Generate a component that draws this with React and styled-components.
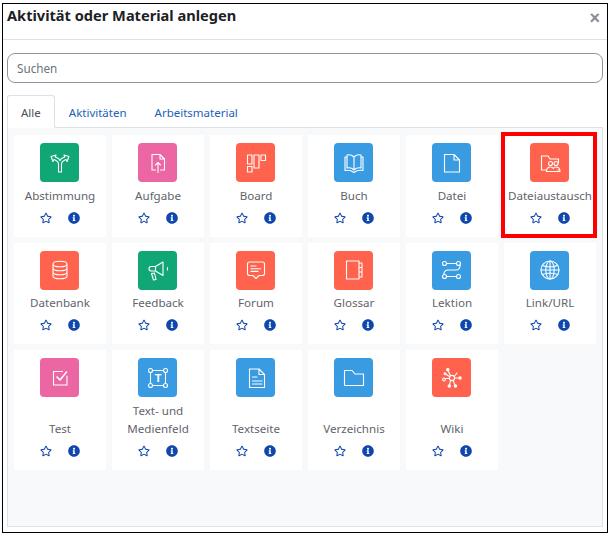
import React from "react";
import styled, { createGlobalStyle } from "styled-components";
import { FaRegStar, FaInfoCircle } from "react-icons/fa";

const GlobalStyle = createGlobalStyle`
  html, body {
    margin: 0;
    padding: 0;
    background: #fff;
  }
  body {
    font-family: "Noto Sans", "Open Sans", sans-serif;
  }
`;

const tones = {
  green: "#11a676",
  pink: "#eb66a2",
  coral: "#ff634d",
  blue: "#399be2",
};

const Frame = styled.div`
  box-sizing: border-box;
  display: flex;
  flex-direction: column;
  width: 606px;
  height: 530px;
  margin: 3px 0 0 2px;
  border: 1px solid #000;
  background: #fff;
`;

const Header = styled.header`
  box-sizing: border-box;
  display: flex;
  justify-content: space-between;
  align-items: flex-start;
  height: 36px;
  padding: 1px 7px 0 4px;
  border-bottom: 1px solid #dee2e6;
`;

const Title = styled.h1`
  margin: 0;
  font-size: 14.6px;
  line-height: 20px;
  font-weight: 700;
  color: #1d2125;
`;

const Close = styled.button`
  border: 0;
  padding: 0;
  margin-top: 3px;
  background: none;
  font-family: "Liberation Sans", sans-serif;
  font-size: 18px;
  line-height: 20px;
  font-weight: 700;
  color: #8a8d90;
`;

const Body = styled.div`
  flex: 1;
  display: flex;
  flex-direction: column;
  padding: 13px 4px 5px;
  min-height: 0;
`;

const Search = styled.input`
  box-sizing: border-box;
  width: 100%;
  height: 30px;
  padding: 0 9px;
  border: 1px solid #8f959e;
  border-radius: 8px;
  font-family: inherit;
  font-size: 11.7px;
  outline: none;

  &::placeholder {
    color: #6a737b;
    opacity: 1;
  }
`;

const Tabs = styled.nav`
  display: flex;
  margin-top: 12px;
  position: relative;
  z-index: 1;
`;

const Tab = styled.a`
  box-sizing: border-box;
  height: 33px;
  padding: 0 13px;
  margin-bottom: -1px;
  border: 1px solid ${(p) => (p.$active ? "#dee2e6" : "transparent")};
  border-bottom-color: ${(p) => (p.$active ? "#fff" : "transparent")};
  border-radius: 3px 3px 0 0;
  background: ${(p) => (p.$active ? "#fff" : "transparent")};
  color: ${(p) => (p.$active ? "#495057" : "#1b62b8")};
  font-size: 11.5px;
  line-height: 34px;
`;

const Panel = styled.div`
  flex: 1;
  border: 1px solid #dee2e6;
  background: #f8f9fa;
  padding: 7px 6px 0;
  min-height: 0;
`;

const Grid = styled.div`
  display: grid;
  grid-template-columns: repeat(6, 92px);
  gap: 6px;
  align-items: stretch;
`;

const Card = styled.div`
  box-sizing: border-box;
  position: relative;
  display: flex;
  flex-direction: column;
  align-items: center;
  padding: 8px 0 6px;
  background: #fff;
`;

const Highlight = styled.span`
  position: absolute;
  top: -3px;
  left: -3px;
  right: -1px;
  bottom: -1px;
  border: 4px solid #f00;
  pointer-events: none;
`;

const Tile = styled.div`
  display: flex;
  align-items: center;
  justify-content: center;
  width: 39px;
  height: 39px;
  margin-right: 1px;
  border-radius: 4px;
  background: ${(p) => tones[p.$tone]};
`;

const Glyph = styled.svg`
  width: 24px;
  height: 24px;
  fill: none;
  stroke: #fff;
  stroke-width: 1.1;
  stroke-linejoin: round;
  stroke-linecap: round;
`;

const Label = styled.div`
  flex: 1;
  display: flex;
  align-items: flex-end;
  justify-content: center;
  margin-top: 4.5px;
  font-size: 11.6px;
  line-height: 18.5px;
  color: #5f646b;
  text-align: center;
  white-space: pre-line;
`;

const Actions = styled.div`
  display: flex;
  align-items: center;
  justify-content: center;
  gap: 16px;
  height: 25.5px;
  color: #0f47ad;
  font-size: 12px;
`;

const Icons = {
  vote: (
    <path d="M10.5 21V13Q10.5 10.5 8 9.5L6 8.5 5 10.5 3 5.5 8 4 7.2 6 9.5 7Q11.5 8 12 9.5 12.5 8 14.5 7L16.8 6 16 4 21 5.5 19 10.5 18 8.5 16 9.5Q13.5 10.5 13.5 13V21Z" />
  ),
  assign: (
    <path d="M9.5 19H6V3.5H14L18.5 8V19H14.5M14 3.5V8H18.5M12 21.5V11.5M9.5 14L12 11.5 14.5 14" />
  ),
  board: (
    <>
      <rect x="3.5" y="4" width="4.5" height="9" />
      <rect x="3.5" y="15.5" width="4.5" height="5.5" />
      <rect x="10" y="4" width="5" height="13" />
      <rect x="17" y="4" width="4.5" height="5.5" />
    </>
  ),
  book: (
    <path d="M12 6C10 4 7 3.5 5 4V17C7 16.5 10 17 12 19 14 17 17 16.5 19 17V4C17 3.5 14 4 12 6V19M5 6H3V19.5C6 19 9.5 19.5 12 21.5 14.5 19.5 18 19 21 19.5V6H19" />
  ),
  file: <path d="M4.5 3.5H14L19.5 9V21H4.5ZM14 3.5V9H19.5" />,
  share: (
    <>
      <path d="M8.5 19H3.5V5H10L12 8H20.5V12M20.5 19H20" />
      <circle cx="12.5" cy="12.5" r="2" />
      <circle cx="18" cy="12.5" r="2" />
      <path d="M8.5 20.5C8.5 17.5 10.5 16 12.5 16 14 16 15 16.8 15.3 17.5 15.8 16.6 16.8 16 18 16 20 16 22 17.5 22 20.5Z" />
    </>
  ),
  database: (
    <path d="M5 6C5 4.5 8 3.2 12 3.2S19 4.5 19 6 16 8.8 12 8.8 5 7.5 5 6V18C5 19.5 8 20.8 12 20.8S19 19.5 19 18V6M5 10C5 11.5 8 12.8 12 12.8S19 11.5 19 10M5 14C5 15.5 8 16.8 12 16.8S19 15.5 19 14" />
  ),
  megaphone: (
    <path d="M9.5 8.5L17 4V17.5L9.5 13ZM9.5 8.5H5Q3 8.5 3 10.7T5 13H9.5M5.5 15.5L8.5 15 10 21.5 7.5 22ZM21.5 9.5V12" />
  ),
  forum: (
    <path d="M5.5 4H18.5Q20.5 4 20.5 6V15.5Q20.5 17.5 18.5 17.5H15L12 20.5 9 17.5H5.5Q3.5 17.5 3.5 15.5V6Q3.5 4 5.5 4ZM7 8H12M7 10.7H16.5M7 13.4H14" />
  ),
  glossary: (
    <path d="M4.5 3H17V21H4.5ZM17 5H20V9.5H17M17 9.5H20V14H17M17 14H20V19H17" />
  ),
  lesson: (
    <>
      <circle cx="4.5" cy="5.5" r="2" />
      <circle cx="18.5" cy="5.5" r="2" />
      <circle cx="4.5" cy="18.5" r="2" />
      <circle cx="18.5" cy="18.5" r="2" />
      <path d="M6.5 5.5H16.5M6.5 18.5H16.5M20 7C20.5 10 18.5 12 16 12H8C5.5 12 3.5 14 4 16.5" />
    </>
  ),
  globe: (
    <>
      <circle cx="12" cy="12" r="9" />
      <ellipse cx="12" cy="12" rx="4.2" ry="9" />
      <path d="M12 3V21M3 12H21M4.5 7.5C9 9.3 15 9.3 19.5 7.5M4.5 16.5C9 14.7 15 14.7 19.5 16.5" />
    </>
  ),
  check: (
    <>
      <path d="M14.5 5.5H5.5V19H19V10" />
      <path d="M9 11L12 14 18.5 6" strokeWidth="1.6" />
    </>
  ),
  media: (
    <>
      <circle cx="4.5" cy="4.5" r="2" />
      <circle cx="19.5" cy="4.5" r="2" />
      <circle cx="4.5" cy="19.5" r="2" />
      <circle cx="19.5" cy="19.5" r="2" />
      <path d="M6.5 4.5H17.5M6.5 19.5H17.5M4.5 6.5V17.5M19.5 6.5V17.5" />
      <text x="12" y="16" textAnchor="middle" fontFamily="Liberation Sans" fontSize="11" fontWeight="700" fill="#fff" stroke="none">T</text>
    </>
  ),
  page: (
    <path d="M5.5 3H15L20.5 8.5V21.5H5.5ZM15 3V8.5H20.5M8.5 11H13M8.5 15H18M8.5 18H18" />
  ),
  folder: <path d="M2.5 19.5V4.5H10L13 8H21.5V19.5Z" />,
  wiki: (
    <>
      <circle cx="12" cy="12" r="2.6" />
      <circle cx="4" cy="13.5" r="1.4" />
      <path d="M10.5 9.8L8 4.5M14.2 10.5L17 7M14.6 12H19.5M13 14.4L15 19M10.6 14.2L9.5 19M9.4 12.5H5.5M9.8 10.8L5.5 8" />
      <g fill="#fff">
        <circle cx="7.8" cy="3.8" r="1.2" />
        <circle cx="20" cy="12" r="1.2" />
        <circle cx="15.4" cy="20" r="1.2" />
        <circle cx="9.3" cy="20" r="1.2" />
        <circle cx="5" cy="7.8" r="0.9" />
      </g>
    </>
  ),
};

const activities = [
  { name: "Abstimmung", tone: "green", icon: "vote" },
  { name: "Aufgabe", tone: "pink", icon: "assign" },
  { name: "Board", tone: "coral", icon: "board" },
  { name: "Buch", tone: "blue", icon: "book" },
  { name: "Datei", tone: "blue", icon: "file" },
  { name: "Dateiaustausch", tone: "coral", icon: "share", marked: true },
  { name: "Datenbank", tone: "coral", icon: "database" },
  { name: "Feedback", tone: "green", icon: "megaphone" },
  { name: "Forum", tone: "coral", icon: "forum" },
  { name: "Glossar", tone: "coral", icon: "glossary" },
  { name: "Lektion", tone: "blue", icon: "lesson" },
  { name: "Link/URL", tone: "blue", icon: "globe" },
  { name: "Test", tone: "pink", icon: "check" },
  { name: "Text- und\nMedienfeld", tone: "blue", icon: "media" },
  { name: "Textseite", tone: "blue", icon: "page" },
  { name: "Verzeichnis", tone: "blue", icon: "folder" },
  { name: "Wiki", tone: "coral", icon: "wiki" },
];

export default function App() {
  return (
    <>
      <GlobalStyle />
      <Frame>
        <Header>
          <Title>Aktivität oder Material anlegen</Title>
          <Close>×</Close>
        </Header>
        <Body>
          <Search placeholder="Suchen" />
          <Tabs>
            <Tab $active>Alle</Tab>
            <Tab>Aktivitäten</Tab>
            <Tab>Arbeitsmaterial</Tab>
          </Tabs>
          <Panel>
            <Grid>
              {activities.map((item) => (
                <Card key={item.name}>
                  <Tile $tone={item.tone}>
                    <Glyph viewBox="0 0 24 24">{Icons[item.icon]}</Glyph>
                  </Tile>
                  <Label>{item.name}</Label>
                  <Actions>
                    <FaRegStar />
                    <FaInfoCircle />
                  </Actions>
                  {item.marked && <Highlight />}
                </Card>
              ))}
            </Grid>
          </Panel>
        </Body>
      </Frame>
    </>
  );
}
